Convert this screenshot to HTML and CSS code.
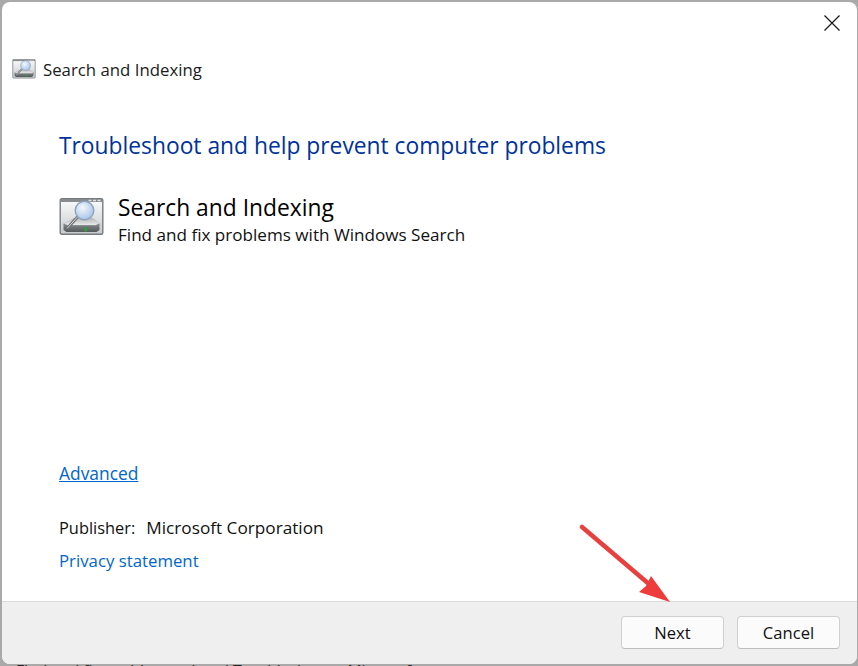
FILE: index.html
```html
<!DOCTYPE html>
<html lang="en">
<head>
<meta charset="utf-8">
<title>Search and Indexing</title>
<link rel="stylesheet" href="styles.css">
</head>
<body>
<div class="backdrop"><span class="peek">Find and fix problems... Local Troubleshoot... Microsoft</span></div>
<main class="window">
  <div class="content">
    <div class="topbar">
      <svg class="close" viewBox="0 0 16 16" width="16" height="16"><path d="M.5.5l15 15M15.500.5l-15 15" fill="none" stroke="#1a1a1a" stroke-width="1.300"/></svg>
    </div>
    <div class="titlerow">
      <svg class="icon-small" viewBox="0 0 44 38" width="24" height="20"><use href="#app"/></svg>
      <span>Search and Indexing</span>
    </div>
    <h1 class="heading">Troubleshoot and help prevent computer problems</h1>
    <div class="tool">
      <svg class="icon-large" viewBox="0 0 44 38" width="45" height="38">
        <defs>
          <linearGradient id="sky" x1="0" y1="0" x2="0" y2="1"><stop offset="0" stop-color="#fbfcfc"/><stop offset="1" stop-color="#c6cacd"/></linearGradient>
          <linearGradient id="disk" x1="0" y1="0" x2="0" y2="1"><stop offset="0" stop-color="#a8abad"/><stop offset="1" stop-color="#55595b"/></linearGradient>
          <linearGradient id="disktop" x1="0" y1="0" x2="0" y2="1"><stop offset="0" stop-color="#b4b7b9"/><stop offset="1" stop-color="#eceded"/></linearGradient>
          <radialGradient id="lens" cx=".4" cy=".35" r=".7"><stop offset="0" stop-color="#f4f8fd"/><stop offset="1" stop-color="#a4c2e8"/></radialGradient>
          <g id="app">
            <rect x=".7" y=".7" width="42.600" height="35.600" rx="1.500" fill="url(#sky)" stroke="#767b7f" stroke-width="1.400"/>
            <rect x="1" y="1" width="42" height="3" fill="#868b8f"/>
            <path d="M29 2.500h3M33.500 2.500h3M38 2.500h3" stroke="#dfe3e6" stroke-width="1.300"/>
            <path d="M4 26l11-6h18l7 6v6l-3 2H7l-3-2z" fill="url(#disk)"/>
            <path d="M4 26l11-6h18l7 6-4 1.500H8z" fill="url(#disktop)"/>
            <path d="M4 26l4 1.500h28l4-1.500" fill="none" stroke="#7f8386" stroke-width=".8"/>
            <rect x="25" y="29" width="2.400" height="4.500" fill="#22a834"/>
            <path d="M18 19L8 30" stroke="#6f7376" stroke-width="3" stroke-linecap="round"/>
            <path d="M18 19L8 30" stroke="#d5d8da" stroke-width="1" stroke-linecap="round"/>
            <circle cx="25" cy="12.500" r="9.300" fill="url(#lens)" stroke="#8ea3ba" stroke-width="1.400"/>
          </g>
        </defs>
        <use href="#app"/>
      </svg>
      <div class="tool-text">
        <div class="tool-name">Search and Indexing</div>
        <div class="tool-desc">Find and fix problems with Windows Search</div>
      </div>
    </div>
    <div class="spacer"></div>
    <a class="link advanced" href="#">Advanced</a>
    <div class="publisher"><span class="pub-label">Publisher:</span><span class="pub-name">Microsoft Corporation</span></div>
    <a class="link privacy" href="#">Privacy statement</a>
  </div>
  <footer class="footer">
    <button class="btn">Next</button>
    <button class="btn">Cancel</button>
  </footer>
</main>
<svg class="arrow" viewBox="0 0 100 90" width="100" height="90"><path d="M3 3L77 66" stroke="#e8403f" stroke-width="4.500" stroke-linecap="round"/><path d="M91 78L60 68 67 62 72 52z" fill="#ee3b3b"/></svg>
</body>
</html>
```
FILE: styles.css
```css
* { box-sizing: border-box; }
html, body { margin: 0; padding: 0; }
body {
  width: 858px;
  height: 666px;
  overflow: hidden;
  position: relative;
  background: #a9a9a9;
  font-family: "Open Sans", "Noto Sans", sans-serif;
  color: #000;
}
.backdrop {
  position: absolute;
  inset: 0;
  overflow: hidden;
}
.peek {
  position: absolute;
  left: 16px;
  top: 661px;
  font-size: 15.700px;
  line-height: 20px;
  white-space: nowrap;
  color: #222;
}
.window {
  position: absolute;
  left: 2px;
  top: 2px;
  width: 855px;
  height: 662px;
  border-radius: 8px;
  background: #fff;
  overflow: hidden;
  display: flex;
  flex-direction: column;
}
.content {
  flex: 1;
  display: flex;
  flex-direction: column;
  padding: 0 0 0 57px;
  position: relative;
}
.topbar {
  position: absolute;
  top: 13px;
  right: 17px;
  height: 16px;
}
.close { display: block; }
.titlerow {
  display: flex;
  align-items: center;
  gap: 7px;
  margin: 55px 0 0 -47px;
  height: 24px;
  font-size: 16.800px;
  color: #1b1b1b;
}
.icon-small { display: block; }
.heading {
  margin: 49px 0 0;
  font-size: 22.800px;
  line-height: 32px;
  font-weight: 400;
  color: #003399;
}
.tool {
  display: flex;
  align-items: flex-start;
  gap: 14px;
  margin-top: 29px;
}
.icon-large { display: block; margin-top: 7px; }
.tool-name { font-size: 22.800px; line-height: 34px; color: #000; }
.tool-desc { font-size: 17.100px; line-height: 20px; color: #111; }
.spacer { flex: 1; }
.link { color: #0066cc; line-height: 24px; }
.advanced { font-size: 17.400px; text-decoration: underline; align-self: flex-start; }
.privacy { font-size: 16.800px; text-decoration: none; align-self: flex-start; margin: 9px 0 28px; }
.publisher {
  display: flex;
  gap: 11px;
  margin-top: 31px;
  line-height: 24px;
  color: #111;
}
.pub-label { font-size: 16.400px; }
.pub-name { font-size: 17.200px; }
.footer {
  height: 63px;
  background: #efefef;
  border-top: 1px solid #dcdcdc;
  display: flex;
  justify-content: flex-end;
  align-items: flex-start;
  gap: 13px;
  padding: 14px 17px 0 0;
}
.btn {
  width: 103px;
  height: 33px;
  background: #fbfbfb;
  border: 1px solid #d0d0d0;
  border-bottom-color: #bdbdbd;
  border-radius: 4px;
  font-family: inherit;
  font-size: 16.600px;
  color: #111;
  padding: 0;
}
.arrow {
  position: absolute;
  left: 579px;
  top: 524px;
}
```
